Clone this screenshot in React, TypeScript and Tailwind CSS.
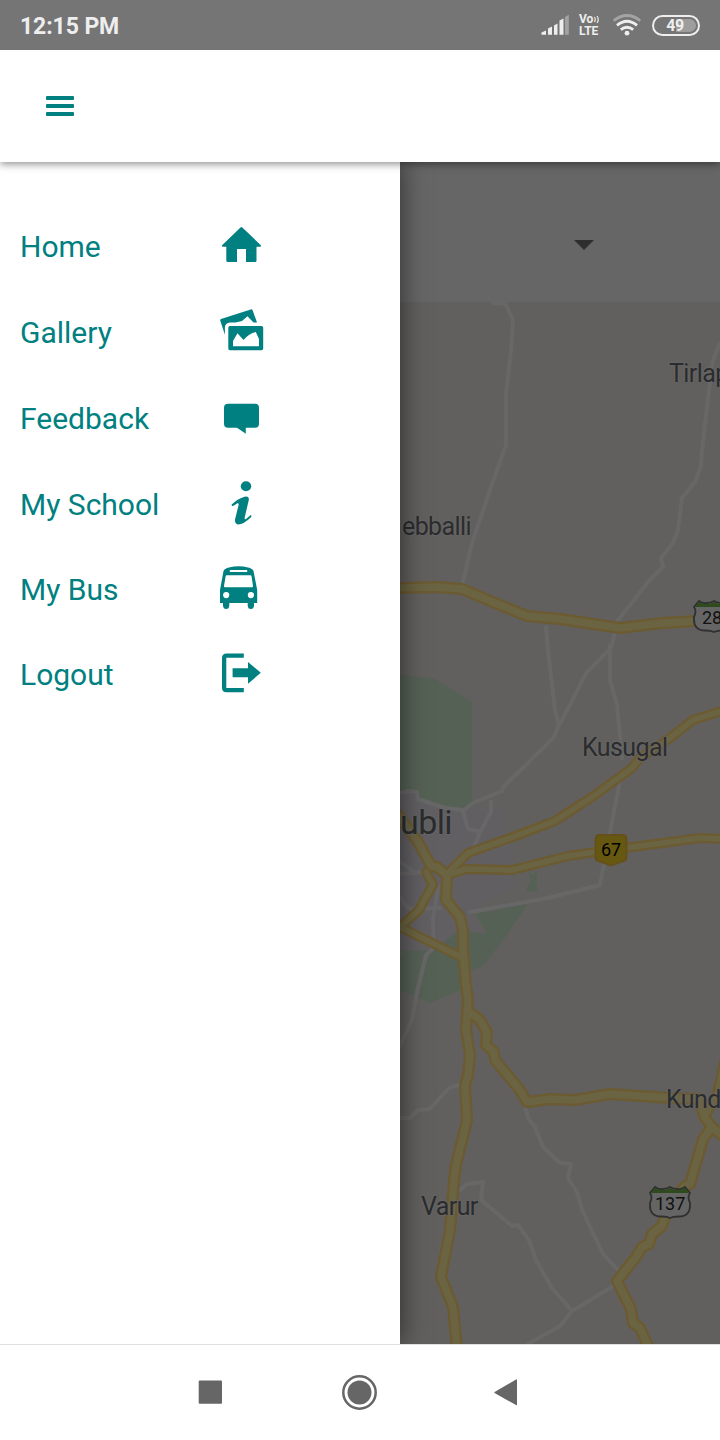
import type { ReactNode } from "react";

const minorRoads = [
  "M493 303 Q500 304 505 303 L513 320 L511 350 L506 395 L506 445 L490 490 L472 543 L463 582",
  "M720 343 L713 360 L709 390 L702 450 L701 466 L695 482 L682 498 L678 530 L673 543 L661 558 L663 567 L648 582 L634 600 L618 620 L611 648 L586 673 L571 703 L558 727 L554 737 L524 767 L504 786 L502 791 L473 803 L463 811 L468 829 L478 831",
  "M546 627 L548 650 L555 710 L559 726",
  "M610 645 L610 680 L617 705 L621 745 L622 758",
  "M620 780 L600 885 L548 898 L470 912",
  "M400 793 L408 791 L417 792 L418 799 L445 808 L463 810",
  "M491 802 L491 812 L480 832 L472 852",
  "M400 874 L427 872",
  "M400 862 L408 867 L414 873",
  "M438 887 L433 920 L434 948 L426 955 L417 992 L412 1020 L400 1046",
  "M400 898 L409 909 L440 908",
  "M400 1118 L410 1118 L418 1110 L430 1109 L449 1088 L462 1084",
  "M525 1106 L528 1118 L535 1127 L543 1147 L560 1163 L571 1164 L568 1178 L577 1192 L582 1210 L603 1254 L618 1270",
  "M460 1190 L467 1184 L483 1182 L481 1200 L512 1226 L518 1225 L529 1240 L536 1260 L552 1288 L572 1311 L615 1285",
  "M572 1311 L560 1326 L528 1344",
];

const secondaryRoads = [
  "M725 710 L693 720 L670 738 L640 758 L632 768 L595 795 L555 821 L510 838 L468 853 L447 874",
  "M447 875 L466 869 L512 870 L568 856 L610 850 L700 838 L725 839",
  "M426 872 L433 885 L423 902 L420 909 L398 929",
  "M398 926 L420 937 L465 959",
  "M725 1058 L716 1098 L705 1116",
];

const trunkRoads = [
  "M395 588 L437 587 L462 589 L495 603 L527 616 L560 619 L620 628 L662 623 L682 622 L715 619",
  "M398 815 L418 842 L431 866 L437 867 L447 875 L446 900 L460 917 L463 930 L463 950 L466 985 L468 1000 L466 1030 L470 1055 L468 1075 L465 1085 L467 1120 L456 1165 L454 1180 L450 1230 L441 1277 L453 1307 L457 1348",
  "M469 1012 L479 1019 L487 1032 L486 1045 L494 1052 L495 1060 L520 1090 L527 1102 L550 1099 L575 1100 L610 1094 L670 1098 L700 1099 L704 1116 L712 1127 L725 1138",
  "M712 1127 L703 1139 L690 1184 L684 1187 L668 1207 L662 1226 L652 1234 L649 1244 L642 1247 L636 1257 L617 1281 L631 1309 L633 1323 L640 1328 L649 1348",
];

function RoadMap() {
  return (
    <svg
      className="block h-full w-full"
      viewBox="400 302 320 1042"
      fill="none"
      strokeLinecap="round"
      strokeLinejoin="round"
    >
      <rect x="400" y="302" width="320" height="1042" fill="#62605e" />
      <path d="M400 793 L408 791 L420 800 L503 808 L506 832 L512 856 L513 875 L517 885 L470 912 L485 935 L455 948 L434 952 L400 950Z" fill="#615f62" />
      <path d="M400 675 L433 678 L472 702 V808 L445 809 L418 800 L417 792 L400 792Z" fill="#566156" />
      <path d="M528 872 L533 875 L537 870 V892 L526 891 L531 880Z" fill="#566156" />
      <path d="M475 914 L528 904 L507 935 L483 966 L462 973 L463 989 L430 1003 L400 990 V956 L405 951 L434 950 L458 931 L487 934Z" fill="#566156" />
      <path d="M438 899 L442 904" stroke="#526472" strokeWidth="2" />
      <g stroke="#676767" strokeWidth="4">
        {minorRoads.map((d) => (
          <path key={d} d={d} />
        ))}
      </g>
      <g stroke="#6c5a30">
        <g strokeWidth="10">
          {secondaryRoads.map((d) => (
            <path key={d} d={d} />
          ))}
        </g>
        <g strokeWidth="12">
          {trunkRoads.map((d) => (
            <path key={d} d={d} />
          ))}
        </g>
      </g>
      <g stroke="#6b6443">
        <g strokeWidth="5.6">
          {secondaryRoads.map((d) => (
            <path key={d} d={d} />
          ))}
        </g>
        <g strokeWidth="7.4">
          {trunkRoads.map((d) => (
            <path key={d} d={d} />
          ))}
        </g>
      </g>
    </svg>
  );
}

function HighwayShield() {
  return (
    <svg className="block h-[34px] w-[44px]" viewBox="0 0 44 34">
      <path
        d="M7 2 Q11 5 15 4 Q19 4 22 2 Q25 4 29 4 Q33 5 37 2 L42 8 Q39 12 42 18 Q43 32 30 31.500 Q25 31.500 22 33 Q19 31.500 14 31.500 Q1 32 2 18 Q5 12 2 8Z"
        fill="#656565"
        stroke="#303030"
        strokeWidth="1.800"
      />
      <path d="M7 2.800 Q11 5.500 15 5 Q19 5 22 3 Q25 5 29 5 Q33 5.500 37 2.800 L41 8H3Z" fill="#2f4a1c" />
    </svg>
  );
}

const labelClass =
  "absolute whitespace-nowrap leading-none text-[#2b2c2e] tracking-[-0.600px] [text-shadow:0_0_3px_#6a6a6a,0_0_2px_#6a6a6a]";

function MapView() {
  return (
    <div className="relative h-[1042px] overflow-hidden">
      <RoadMap />
      <span className={`${labelClass} left-[269px] top-[59px] text-[25px]`}>Tirlap</span>
      <span className={`${labelClass} left-[2px] top-[212px] text-[25px]`}>ebballi</span>
      <span className={`${labelClass} left-[182px] top-[433px] text-[25px]`}>Kusugal</span>
      <span className={`${labelClass} left-0 top-[503px] text-[34px] text-[#1c1c1c]`}>ubli</span>
      <span className={`${labelClass} left-[266px] top-[785px] text-[25px]`}>Kund</span>
      <span className={`${labelClass} left-[21px] top-[892px] text-[25px]`}>Varur</span>

      <div className="absolute left-[292px] top-[297px]">
        <HighwayShield />
        <span className="absolute left-[10px] top-[10px] text-[18px] leading-none text-[#111]">28</span>
      </div>
      <div className="absolute left-[248px] top-[883px]">
        <HighwayShield />
        <span className="absolute left-[7px] top-[10px] text-[18px] leading-none text-[#111]">137</span>
      </div>
      <div className="absolute left-[194px] top-[531px]">
        <svg className="block h-[34px] w-[34px]" viewBox="0 0 34 34">
          <path d="M5 2H29Q32.500 2 32.500 6V25Q32.500 27 30 28L17 32.500L4 28Q1.500 27 1.500 25V6Q1.500 2 5 2Z" fill="#665711" stroke="#65501a" strokeWidth="1.800" />
        </svg>
        <span className="absolute left-[7px] top-[8px] text-[18px] leading-none text-black">67</span>
      </div>
    </div>
  );
}

function StatusBar() {
  return (
    <div className="z-30 flex h-[50px] shrink-0 items-center justify-between bg-[#757575] pl-5 pr-5 text-[#eeeeee]">
      <span className="pt-[2px] text-[23px] font-bold leading-none tracking-[-0.100px]">12:15 PM</span>
      <div className="flex items-center">
        <svg className="mr-[10px] h-[22px] w-[28px]" viewBox="541 14 28 22">
          <path d="M541.500 34.800V32.500L546 30.500V34.800ZM548 34.800V28.500L552 26.500V34.800ZM554 34.800V25.500L557.500 23.500V34.800ZM559.500 34.800V20.500L563.500 18.500V34.800Z" fill="#eee" />
          <path d="M565 34.800V17L568.800 14.800V34.800Z" fill="#a2a2a2" />
        </svg>
        <div className="mr-[11px] flex w-[23px] flex-col">
          <div className="flex h-[12px] items-center">
            <span className="text-[12px] font-bold leading-[12px]">Vo</span>
            <svg className="h-[9px] w-[7px]" viewBox="0 0 7 9" fill="none" stroke="#eee" strokeWidth="1.200">
              <path d="M1.500 2Q3 4.500 1.500 7M4 1Q6.500 4.500 4 8" />
            </svg>
          </div>
          <span className="text-[12px] font-bold leading-[12px]">LTE</span>
        </div>
        <svg className="mr-[11px] h-[22px] w-[28px]" viewBox="613 14 28 22" fill="none" stroke="#eee" strokeWidth="2.900">
          <path d="M613.700 20.700Q627 10.500 640.300 20.700" stroke="#a4a4a4" />
          <path d="M617 25.300Q627 17 637 25.300M620.800 29.700Q627 24.800 633.200 29.700" />
          <circle cx="627" cy="33.200" r="2.400" fill="#eee" stroke="none" />
        </svg>
        <div className="flex h-[21px] w-[48px] items-center rounded-full border-2 border-[#eee] p-[2px]">
          <div className="flex h-full w-full items-center justify-center rounded-full bg-gradient-to-r from-[#757575] from-50% to-[#9d9d9d] to-50% pr-[2px]">
            <span className="pt-px text-[16px] font-bold leading-none tracking-[-0.500px]">49</span>
          </div>
        </div>
      </div>
    </div>
  );
}

const menu: { label: string; height: string; viewBox: string; icon: ReactNode }[] = [
  {
    label: "Home",
    height: "h-[86px]",
    viewBox: "218 223 48 48",
    icon: (
      <path d="M240.500 227.500Q241.400 226.700 242.300 227.500L260.800 245.200Q261.600 246.500 260 246.700H256.500V260.500Q256.500 262 255 262H246V249H237V262H228Q226.300 262 226.300 260.500V246.700H223Q221.300 246.500 222.100 245.200Z" />
    ),
  },
  {
    label: "Gallery",
    height: "h-[86px]",
    viewBox: "218 309 48 48",
    icon: (
      <>
        <path d="M220.300 320.800Q219.800 319.500 221 319L250.700 309.400Q252 309 252.600 310.200L257 322.400H253.500L247.500 316.200L242 321L235.500 322.400H230Q225.200 323 224.900 327V334.800Z" />
        <path fillRule="evenodd" d="M230 326H261.500Q263.200 326 263.200 327.700V348.500Q263.200 350.300 261.500 350.300H230Q228.300 350.300 228.300 348.500V327.700Q228.300 326 230 326ZM233 346.200H259V339L255.800 332Q249 333.500 243.500 340L237.500 333.200L233 341Z" />
      </>
    ),
  },
  {
    label: "Feedback",
    height: "h-[86px]",
    viewBox: "218 395 48 48",
    icon: (
      <path d="M228 403.800H255Q259 403.800 259 407.800V423.800Q259 427.800 255 427.800H245.800V433.800L237 427.800H228Q224 427.800 224 423.800V407.800Q224 403.800 228 403.800Z" />
    ),
  },
  {
    label: "My School",
    height: "h-[86px]",
    viewBox: "218 481 48 48",
    icon: (
      <>
        <ellipse cx="246" cy="486.200" rx="5.200" ry="5" />
        <path d="M231.700 504.500Q238 498.500 244.500 496.700Q249.300 495.600 248.800 500L244.700 517.500Q244.300 519.800 246 519L250.800 515Q252 515.500 251 517.300Q243 525 237.500 524.500Q234.400 523.500 235 519.500L238.600 505Q239 502.800 237.500 503.200L233 506Q231.300 506.300 231.700 504.500Z" />
      </>
    ),
  },
  {
    label: "My Bus",
    height: "h-[84px]",
    viewBox: "218 566 48 48",
    icon: (
      <path fillRule="evenodd" d="M223.500 571Q224.500 568.500 229 567.500Q238.500 565 248 567.500Q252.500 568.500 253.500 571L257.200 590V603H254V605.500Q253.800 609 250.800 609Q247.900 609 247.700 605.500V603H229.300V605.500Q229 609 226.200 609Q223.300 609 223 605.500V603H220V590ZM229.800 570V572H247.200V570ZM226.800 575.200Q225.800 575.200 225.600 576.500L224 586Q223.900 587.200 225 587.200H252Q253.200 587.200 253 586L251.600 576.500Q251.400 575.200 250.400 575.200ZM226.200 592A3.100 3.100 0 1 0 226.200 598.200A3.100 3.100 0 1 0 226.200 592ZM250.900 592A3.100 3.100 0 1 0 250.900 598.200A3.100 3.100 0 1 0 250.900 592Z" />
    ),
  },
  {
    label: "Logout",
    height: "h-[86px]",
    viewBox: "218 651 48 48",
    icon: (
      <path d="M226.500 653.400H243.800V657.800H226.300V688H243.800V692.300H226.500Q222 692.300 222 687.800V657.900Q222 653.400 226.500 653.400ZM232.600 668.200H248V662L260.800 672.800L248 683.700V677.200H232.600Z" />
    ),
  },
];

function Drawer() {
  return (
    <nav className="z-10 flex w-[400px] shrink-0 flex-col bg-white pt-[42px] text-[#008080] shadow-[2px_0_24px_rgba(0,0,0,0.500)]">
      {menu.map((item) => (
        <div key={item.label} className={`flex items-center pl-5 ${item.height}`}>
          <span className="w-[198px] text-[30px] leading-none">{item.label}</span>
          <svg className="h-12 w-12" viewBox={item.viewBox} fill="currentColor">
            {item.icon}
          </svg>
        </div>
      ))}
    </nav>
  );
}

function NavigationBar() {
  return (
    <footer className="z-20 flex h-24 items-center border-t border-[#e0e0e0] bg-white pb-px pl-[198px] text-[#666]">
      <svg className="h-6 w-6" viewBox="0 0 24 24" fill="currentColor">
        <rect x="0.700" y="0.500" width="23.300" height="23.300" rx="1" />
      </svg>
      <svg className="ml-[119px] h-9 w-9" viewBox="0 0 36 36">
        <circle cx="18.500" cy="18.500" r="16.200" fill="none" stroke="currentColor" strokeWidth="2.500" />
        <circle cx="18.500" cy="18.500" r="12" fill="currentColor" />
      </svg>
      <svg className="ml-[117px] h-7 w-6" viewBox="0 0 24 28" fill="currentColor">
        <path d="M1 13.700L22 1.500Q23 1 23 2V26.500Q23 27.500 22 27L1 15.300Q-0.300 14.500 1 13.700Z" />
      </svg>
    </footer>
  );
}

export default function App() {
  return (
    <div className="flex h-[1440px] w-[720px] flex-col overflow-hidden bg-white font-[Roboto,sans-serif]">
      <StatusBar />
      <header className="z-20 flex h-28 shrink-0 items-center bg-white pl-[46px] shadow-[0_2px_8px_rgba(0,0,0,0.450)]">
        <button aria-label="Menu" className="flex w-7 flex-col gap-1">
          <span className="h-1 rounded-[1px] bg-[#008080]" />
          <span className="h-1 rounded-[1px] bg-[#008080]" />
          <span className="h-1 rounded-[1px] bg-[#008080]" />
        </button>
      </header>
      <main className="flex h-[1182px] shrink-0">
        <Drawer />
        <section className="flex w-[320px] flex-col bg-[#666]">
          <div className="flex h-[140px] items-center pl-[174px] pt-[25px]">
            <svg className="h-[10px] w-5" viewBox="0 0 20 10" fill="#2e2e2e">
              <path d="M0 0H20L10 10Z" />
            </svg>
          </div>
          <MapView />
        </section>
      </main>
      <NavigationBar />
    </div>
  );
}
